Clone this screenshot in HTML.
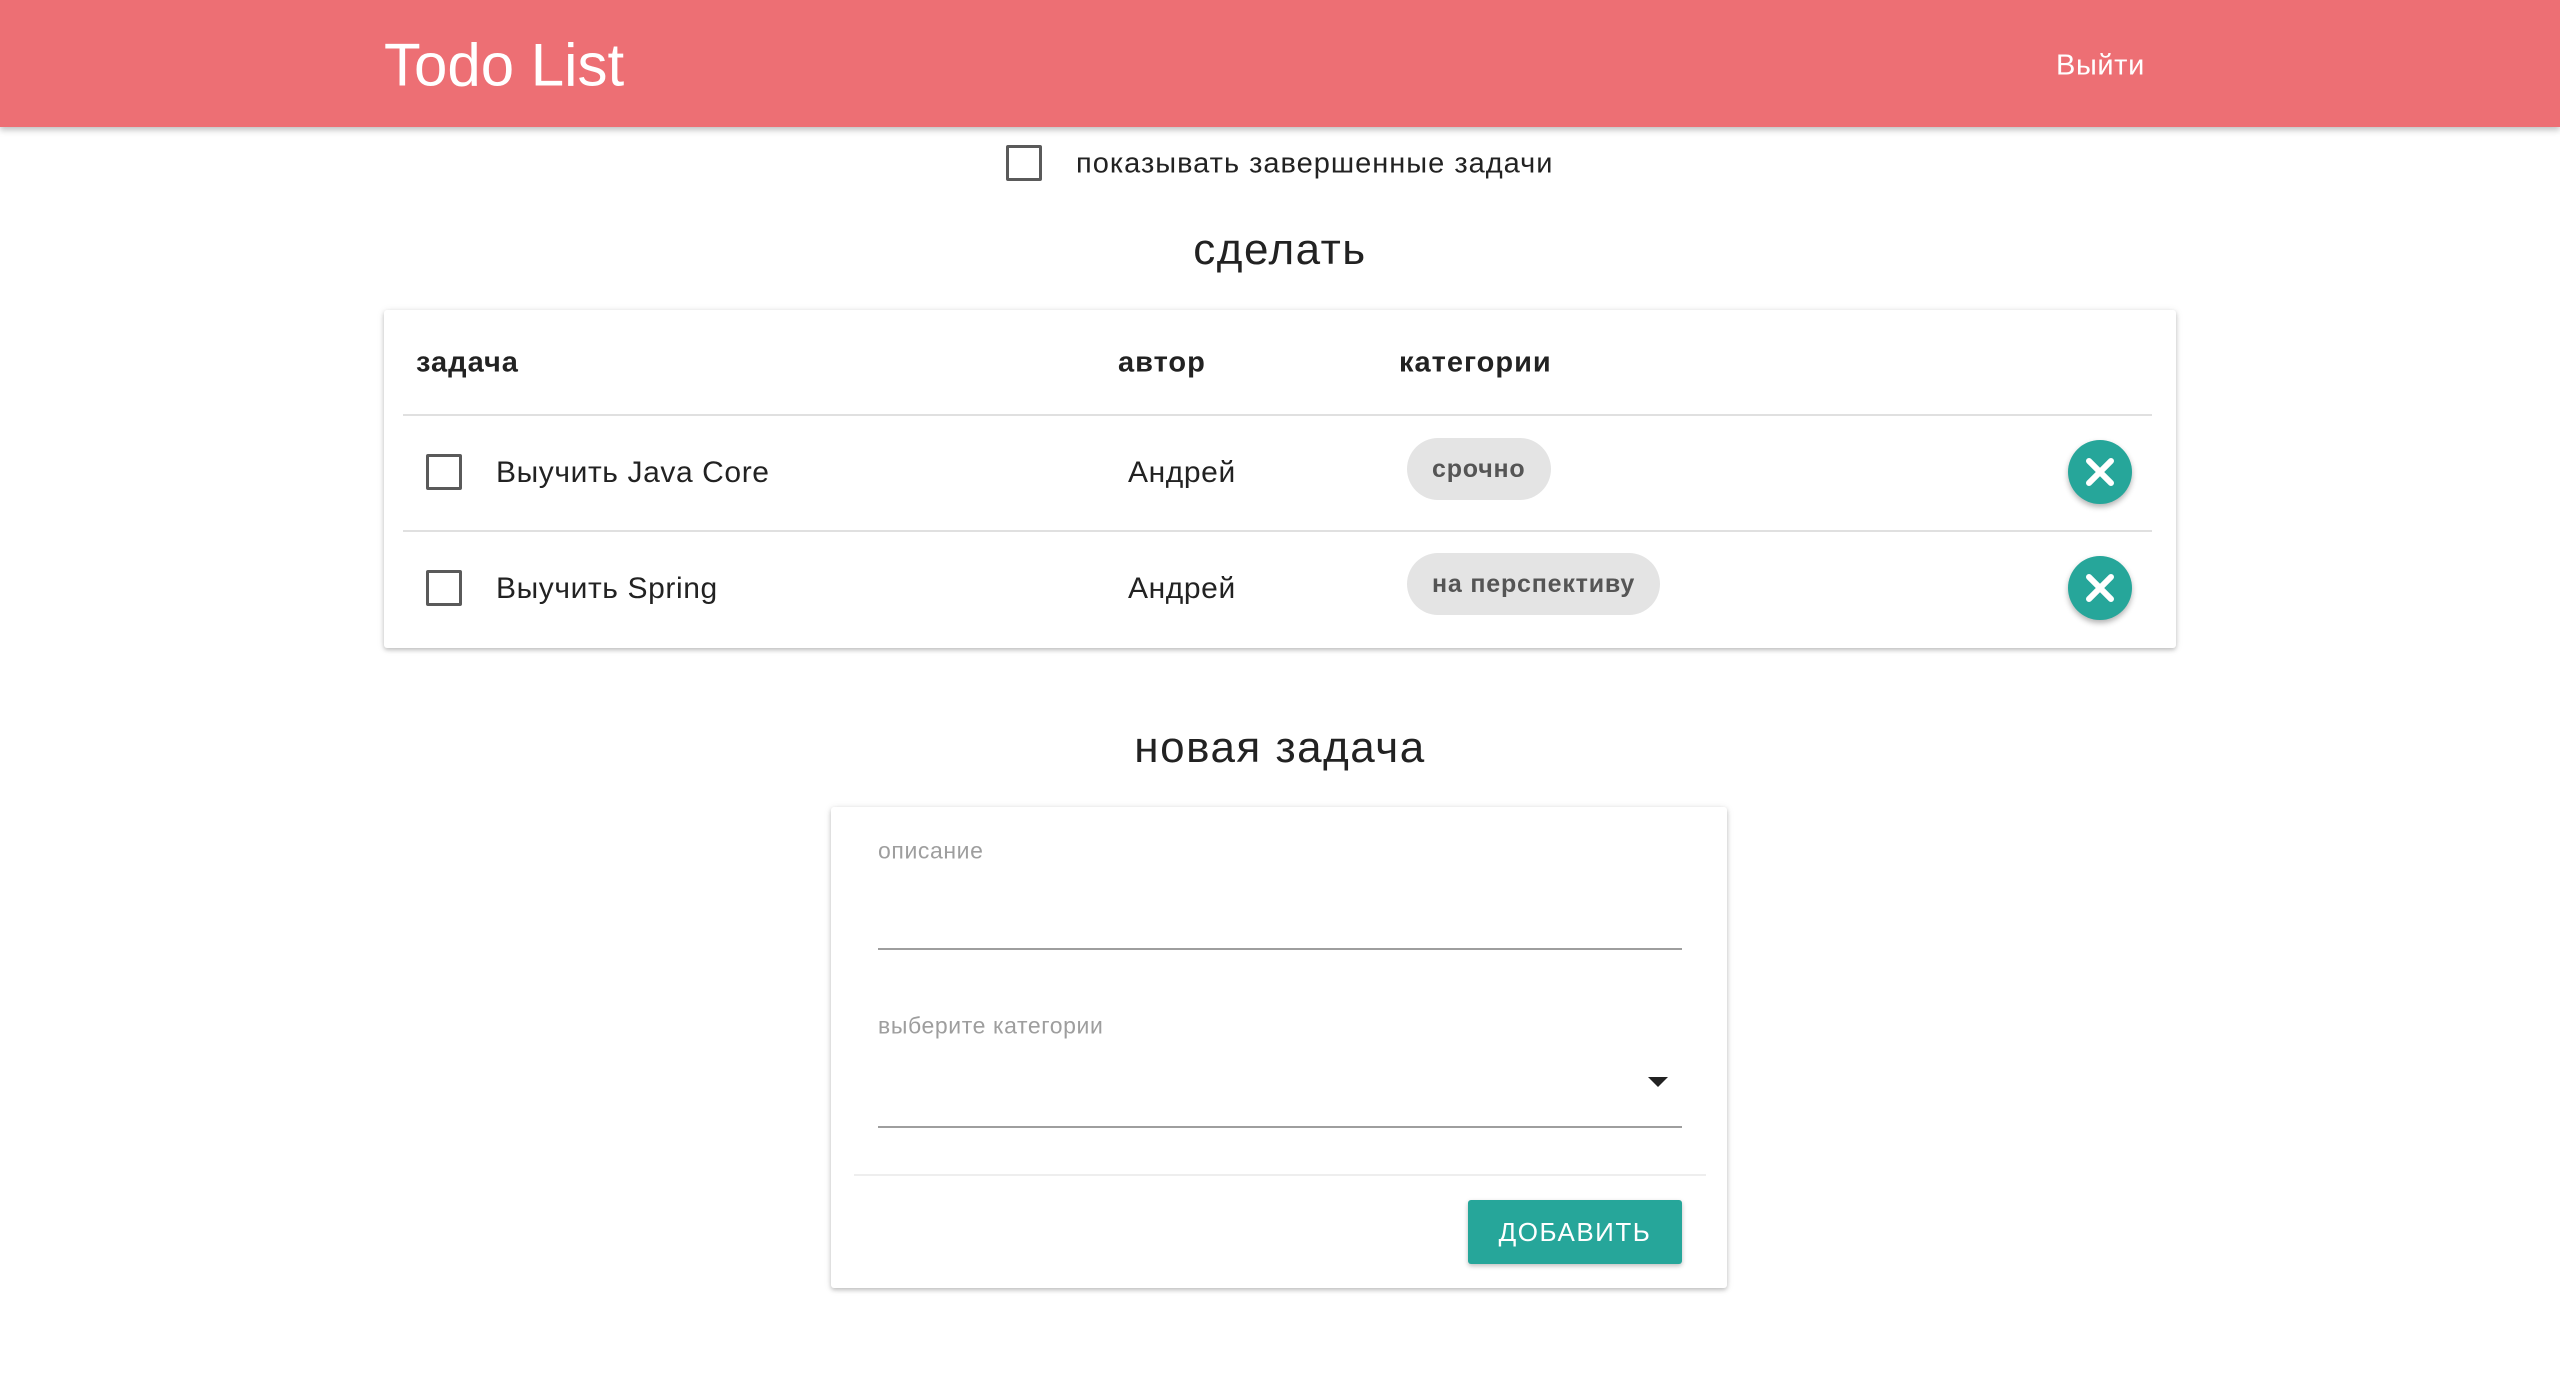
<!DOCTYPE html>
<html><head><meta charset="utf-8"><style>
*{box-sizing:border-box;margin:0;padding:0}
body{width:2560px;height:1378px;background:#fff;font-family:"Liberation Sans",sans-serif;color:#222;position:relative;overflow:hidden}
.a{position:absolute}
.hdr{left:0;top:0;width:2560px;height:127px;background:#ed6f74;box-shadow:0 3px 6px rgba(0,0,0,.25)}
.cb{border:3px solid #5a5a5a;border-radius:2px;width:36px;height:36px}
.card{background:#fff;box-shadow:0 2px 4px rgba(0,0,0,.2),0 1px 8px rgba(0,0,0,.1);border-radius:3px}
.t{white-space:nowrap;transform:translateY(-50%);letter-spacing:0.6px}
.chip{background:#e4e4e4;border-radius:31px;height:62px;line-height:62px;padding:0 25px;font-size:25px;color:#555;font-weight:bold;letter-spacing:0.8px}
.del{width:64px;height:64px;border-radius:50%;background:#26a69a;box-shadow:0 3px 6px rgba(0,0,0,.3)}
.line{height:2px;background:#9e9e9e}
</style></head><body>
<div class="a hdr"></div>
<div class="a t" style="left:384px;top:65px;font-size:60px;color:#fff;letter-spacing:0">Todo List</div>
<div class="a t" style="left:2056px;top:66px;font-size:29px;color:#fff">Выйти</div>

<div class="a cb" style="left:1006px;top:145px"></div>
<div class="a t" style="left:1076px;top:164px;font-size:29px;letter-spacing:1px">показывать завершенные задачи</div>
<div class="a t" style="left:0;width:2560px;text-align:center;top:250px;font-size:44px;letter-spacing:1.5px">сделать</div>

<div class="a card" style="left:384px;top:310px;width:1792px;height:338px"></div>
<div class="a t" style="left:416px;top:363px;font-size:29px;font-weight:bold;letter-spacing:1px">задача</div>
<div class="a t" style="left:1118px;top:363px;font-size:29px;font-weight:bold;letter-spacing:1px">автор</div>
<div class="a t" style="left:1399px;top:363px;font-size:29px;font-weight:bold;letter-spacing:1px">категории</div>
<div class="a" style="left:403px;top:414px;width:1749px;height:2px;background:#e0e0e0"></div>
<div class="a" style="left:403px;top:530px;width:1749px;height:2px;background:#e0e0e0"></div>

<div class="a cb" style="left:426px;top:454px"></div>
<div class="a t" style="left:496px;top:473px;font-size:30px">Выучить Java Core</div>
<div class="a t" style="left:1128px;top:473px;font-size:30px">Андрей</div>
<div class="a chip" style="left:1407px;top:438px">срочно</div>
<div class="a del" style="left:2068px;top:440px"><svg width="64" height="64"><path d="M21 21L43 43M43 21L21 43" stroke="#fff" stroke-width="6" stroke-linecap="round"/></svg></div>

<div class="a cb" style="left:426px;top:570px"></div>
<div class="a t" style="left:496px;top:589px;font-size:30px">Выучить Spring</div>
<div class="a t" style="left:1128px;top:589px;font-size:30px">Андрей</div>
<div class="a chip" style="left:1407px;top:553px">на перспективу</div>
<div class="a del" style="left:2068px;top:556px"><svg width="64" height="64"><path d="M21 21L43 43M43 21L21 43" stroke="#fff" stroke-width="6" stroke-linecap="round"/></svg></div>

<div class="a t" style="left:0;width:2560px;text-align:center;top:748px;font-size:44px;letter-spacing:1.5px">новая задача</div>
<div class="a card" style="left:831px;top:807px;width:896px;height:481px"></div>
<div class="a t" style="left:878px;top:851px;font-size:23px;color:#9e9e9e">описание</div>
<div class="a line" style="left:878px;top:948px;width:804px"></div>
<div class="a t" style="left:878px;top:1026px;font-size:23px;color:#9e9e9e">выберите категории</div>
<div class="a" style="left:1648px;top:1077px;width:0;height:0;border-left:10px solid transparent;border-right:10px solid transparent;border-top:10px solid #222"></div>
<div class="a line" style="left:878px;top:1126px;width:804px"></div>
<div class="a" style="left:854px;top:1174px;width:852px;height:2px;background:#eee"></div>
<div class="a" style="left:1468px;top:1200px;width:214px;height:64px;background:#26a69a;border-radius:3px;box-shadow:0 2px 5px rgba(0,0,0,.25);color:#fff;font-size:26px;text-align:center;line-height:64px;letter-spacing:1.5px">ДОБАВИТЬ</div>
</body></html>
